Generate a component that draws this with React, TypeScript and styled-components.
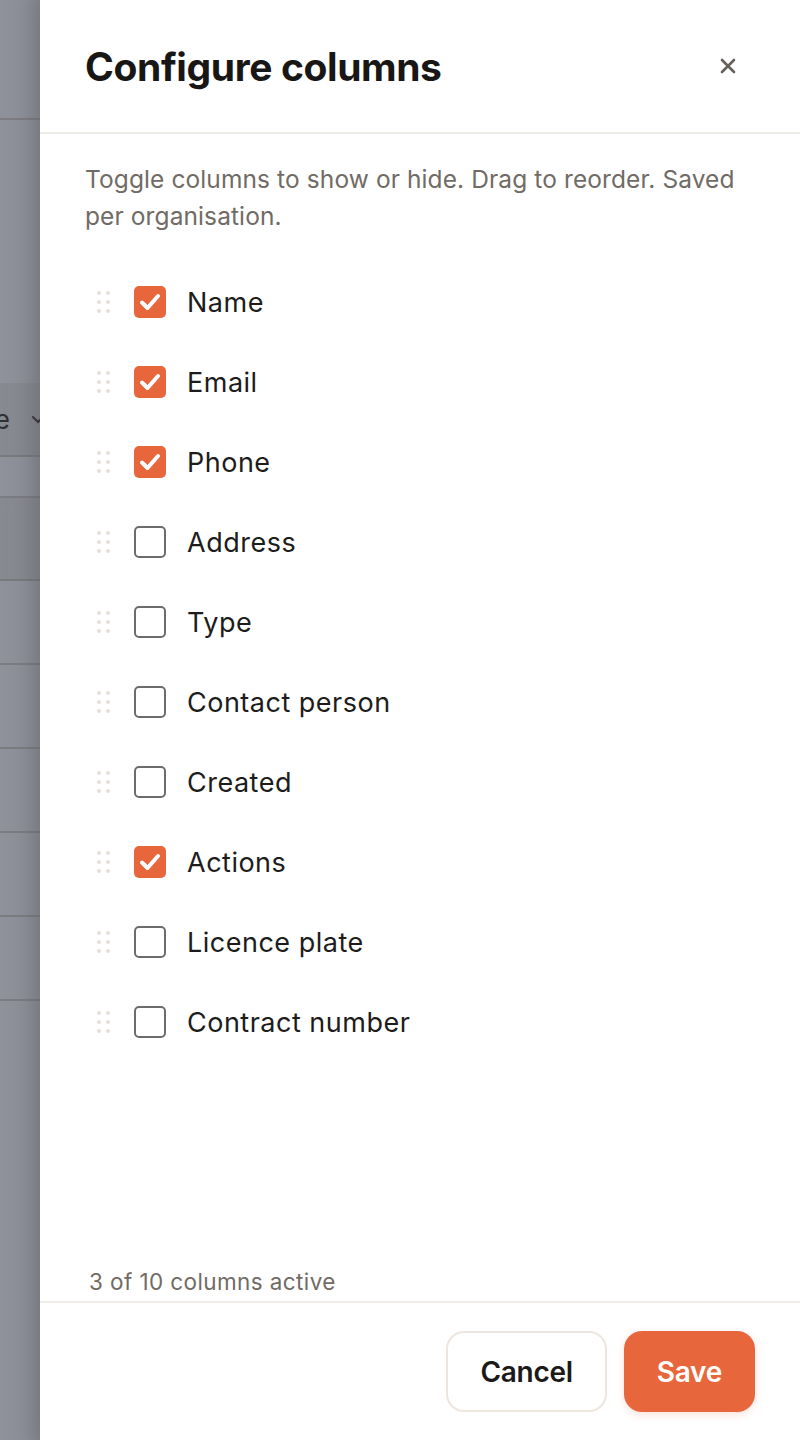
import React, { useState } from "react";
import styled, { createGlobalStyle } from "styled-components";

const GlobalStyle = createGlobalStyle`
  html, body {
    margin: 0;
    padding: 0;
    height: 100%;
  }
  body {
    font-family: Inter, "Noto Sans", "DejaVu Sans", sans-serif;
    background: #8e919a;
    color: #1c1b1a;
  }
  * {
    box-sizing: border-box;
  }
`;

const Screen = styled.div`
  display: flex;
  width: 100%;
  height: 1440px;
  overflow: hidden;
`;

const Backdrop = styled.div`
  flex: 0 0 40px;
  display: flex;
  flex-direction: column;
  overflow: hidden;
  background: linear-gradient(90deg, #8f929b 0%, #8b8e97 60%, #82848c 100%);
`;

const BackRow = styled.div<{ $h: number; $dark?: boolean; $line?: boolean }>`
  flex: 0 0 ${(p) => p.$h}px;
  display: flex;
  align-items: center;
  justify-content: flex-end;
  white-space: nowrap;
  overflow: hidden;
  border-bottom: ${(p) => (p.$line ? "2px solid rgba(110, 108, 112, 0.55)" : "none")};
  background: ${(p) => (p.$dark ? "rgba(120, 118, 120, 0.28)" : "transparent")};
  font-size: 26px;
  color: #2f2f33;
  gap: 20px;

  & > * {
    flex-shrink: 0;
  }

  svg {
    margin-right: -6px;
  }
`;

const Drawer = styled.aside`
  flex: 1;
  display: flex;
  flex-direction: column;
  background: #ffffff;
  box-shadow: -6px 0 20px rgba(20, 20, 30, 0.1);
`;

const Header = styled.header`
  flex: 0 0 134px;
  display: flex;
  align-items: center;
  justify-content: space-between;
  padding: 0 58px 0 45px;
  border-bottom: 2px solid #efebe6;
`;

const Title = styled.h1`
  margin: 0;
  font-size: 39px;
  font-weight: 700;
  letter-spacing: -0.01em;
  color: #181716;
`;

const CloseButton = styled.button`
  display: flex;
  align-items: center;
  justify-content: center;
  width: 28px;
  height: 28px;
  padding: 0;
  border: none;
  background: none;
  cursor: pointer;
`;

const Body = styled.div`
  flex: 1;
  display: flex;
  flex-direction: column;
  padding: 27px 45px 0;
`;

const Description = styled.p`
  margin: 0 0 27px;
  font-size: 24.5px;
  line-height: 37px;
  color: #716b65;
  letter-spacing: 0.1px;
`;

const List = styled.ul`
  list-style: none;
  margin: 0;
  padding: 0;
`;

const Row = styled.li`
  height: 80px;
  display: flex;
  align-items: center;
  padding-left: 12px;
  cursor: pointer;
`;

const Handle = styled.span`
  display: grid;
  grid-template-columns: repeat(2, 4px);
  grid-auto-rows: 4px;
  column-gap: 5px;
  row-gap: 5px;
  margin-right: 24px;

  i {
    width: 4px;
    height: 4px;
    border-radius: 50%;
    background: #e6dfd7;
  }
`;

const Box = styled.span<{ $on: boolean }>`
  flex: 0 0 32px;
  width: 32px;
  height: 32px;
  border-radius: 5px;
  display: flex;
  align-items: center;
  justify-content: center;
  background: ${(p) => (p.$on ? "#e8663c" : "#ffffff")};
  border: ${(p) => (p.$on ? "none" : "2px solid #6e6c6b")};
  margin-right: 21px;
`;

const Label = styled.span`
  font-size: 27px;
  color: #1d1c1b;
  letter-spacing: 0.5px;
`;

const Counter = styled.div`
  margin-top: auto;
  padding: 0 0 5px 4px;
  font-size: 22.5px;
  line-height: 28px;
  letter-spacing: 0.4px;
  color: #716b65;
`;

const Footer = styled.footer`
  flex: 0 0 139px;
  display: flex;
  align-items: center;
  justify-content: flex-end;
  gap: 17px;
  padding: 0 45px;
  border-top: 2px solid #efebe6;
`;

const Button = styled.button<{ $primary?: boolean }>`
  height: 81px;
  padding: 0 ${(p) => (p.$primary ? "33px" : "32px")};
  border-radius: 18px;
  font-family: inherit;
  font-size: 28px;
  font-weight: 600;
  letter-spacing: -0.01em;
  cursor: pointer;
  border: ${(p) => (p.$primary ? "none" : "2px solid #ece6df")};
  background: ${(p) => (p.$primary ? "#e8663c" : "#ffffff")};
  color: ${(p) => (p.$primary ? "#ffffff" : "#1b1a19")};
  box-shadow: ${(p) => (p.$primary ? "0 3px 8px rgba(232, 102, 60, 0.18)" : "none")};
`;

const initial = [
  { name: "Name", on: true },
  { name: "Email", on: true },
  { name: "Phone", on: true },
  { name: "Address", on: false },
  { name: "Type", on: false },
  { name: "Contact person", on: false },
  { name: "Created", on: false },
  { name: "Actions", on: true },
  { name: "Licence plate", on: false },
  { name: "Contract number", on: false },
];

const Check = () => (
  <svg width="24" height="24" viewBox="0 0 24 24" fill="none">
    <path
      d="M4 12.5 L9.5 18 L20 6"
      stroke="#ffffff"
      strokeWidth="4"
      strokeLinecap="round"
      strokeLinejoin="round"
    />
  </svg>
);

const CloseIcon = () => (
  <svg width="16" height="16" viewBox="0 0 16 16" fill="none">
    <path d="M2 2 L14 14 M14 2 L2 14" stroke="#66605b" strokeWidth="2.6" strokeLinecap="round" />
  </svg>
);

const backRows = [
  { h: 120, line: true },
  { h: 263 },
  { h: 74, dark: true, line: true, text: true },
  { h: 41, line: true },
  { h: 83, dark: true, line: true },
  { h: 84, line: true },
  { h: 84, line: true },
  { h: 84, line: true },
  { h: 84, line: true },
  { h: 84, line: true },
];

export default function App() {
  const [cols, setCols] = useState(initial);

  const toggle = (i: number) =>
    setCols((prev) => prev.map((c, j) => (j === i ? { ...c, on: !c.on } : c)));

  return (
    <>
      <GlobalStyle />
      <Screen>
        <Backdrop>
          {backRows.map((r, i) => (
            <BackRow key={i} $h={r.h} $dark={r.dark} $line={r.line}>
              {r.text && (
                <>
                  <span>Type</span>
                  <svg width="16" height="16" viewBox="0 0 16 16" fill="none">
                    <path d="M3 6 L8 11 L13 6" stroke="#3a3a3e" strokeWidth="2" strokeLinecap="round" />
                  </svg>
                </>
              )}
            </BackRow>
          ))}
        </Backdrop>
        <Drawer>
          <Header>
            <Title>Configure columns</Title>
            <CloseButton aria-label="Close">
              <CloseIcon />
            </CloseButton>
          </Header>
          <Body>
            <Description>
              Toggle columns to show or hide. Drag to reorder. Saved per organisation.
            </Description>
            <List>
              {cols.map((c, i) => (
                <Row key={c.name} onClick={() => toggle(i)}>
                  <Handle>
                    <i />
                    <i />
                    <i />
                    <i />
                    <i />
                    <i />
                  </Handle>
                  <Box $on={c.on}>{c.on && <Check />}</Box>
                  <Label>{c.name}</Label>
                </Row>
              ))}
            </List>
            <Counter>3 of {cols.length} columns active</Counter>
          </Body>
          <Footer>
            <Button>Cancel</Button>
            <Button $primary>Save</Button>
          </Footer>
        </Drawer>
      </Screen>
    </>
  );
}
